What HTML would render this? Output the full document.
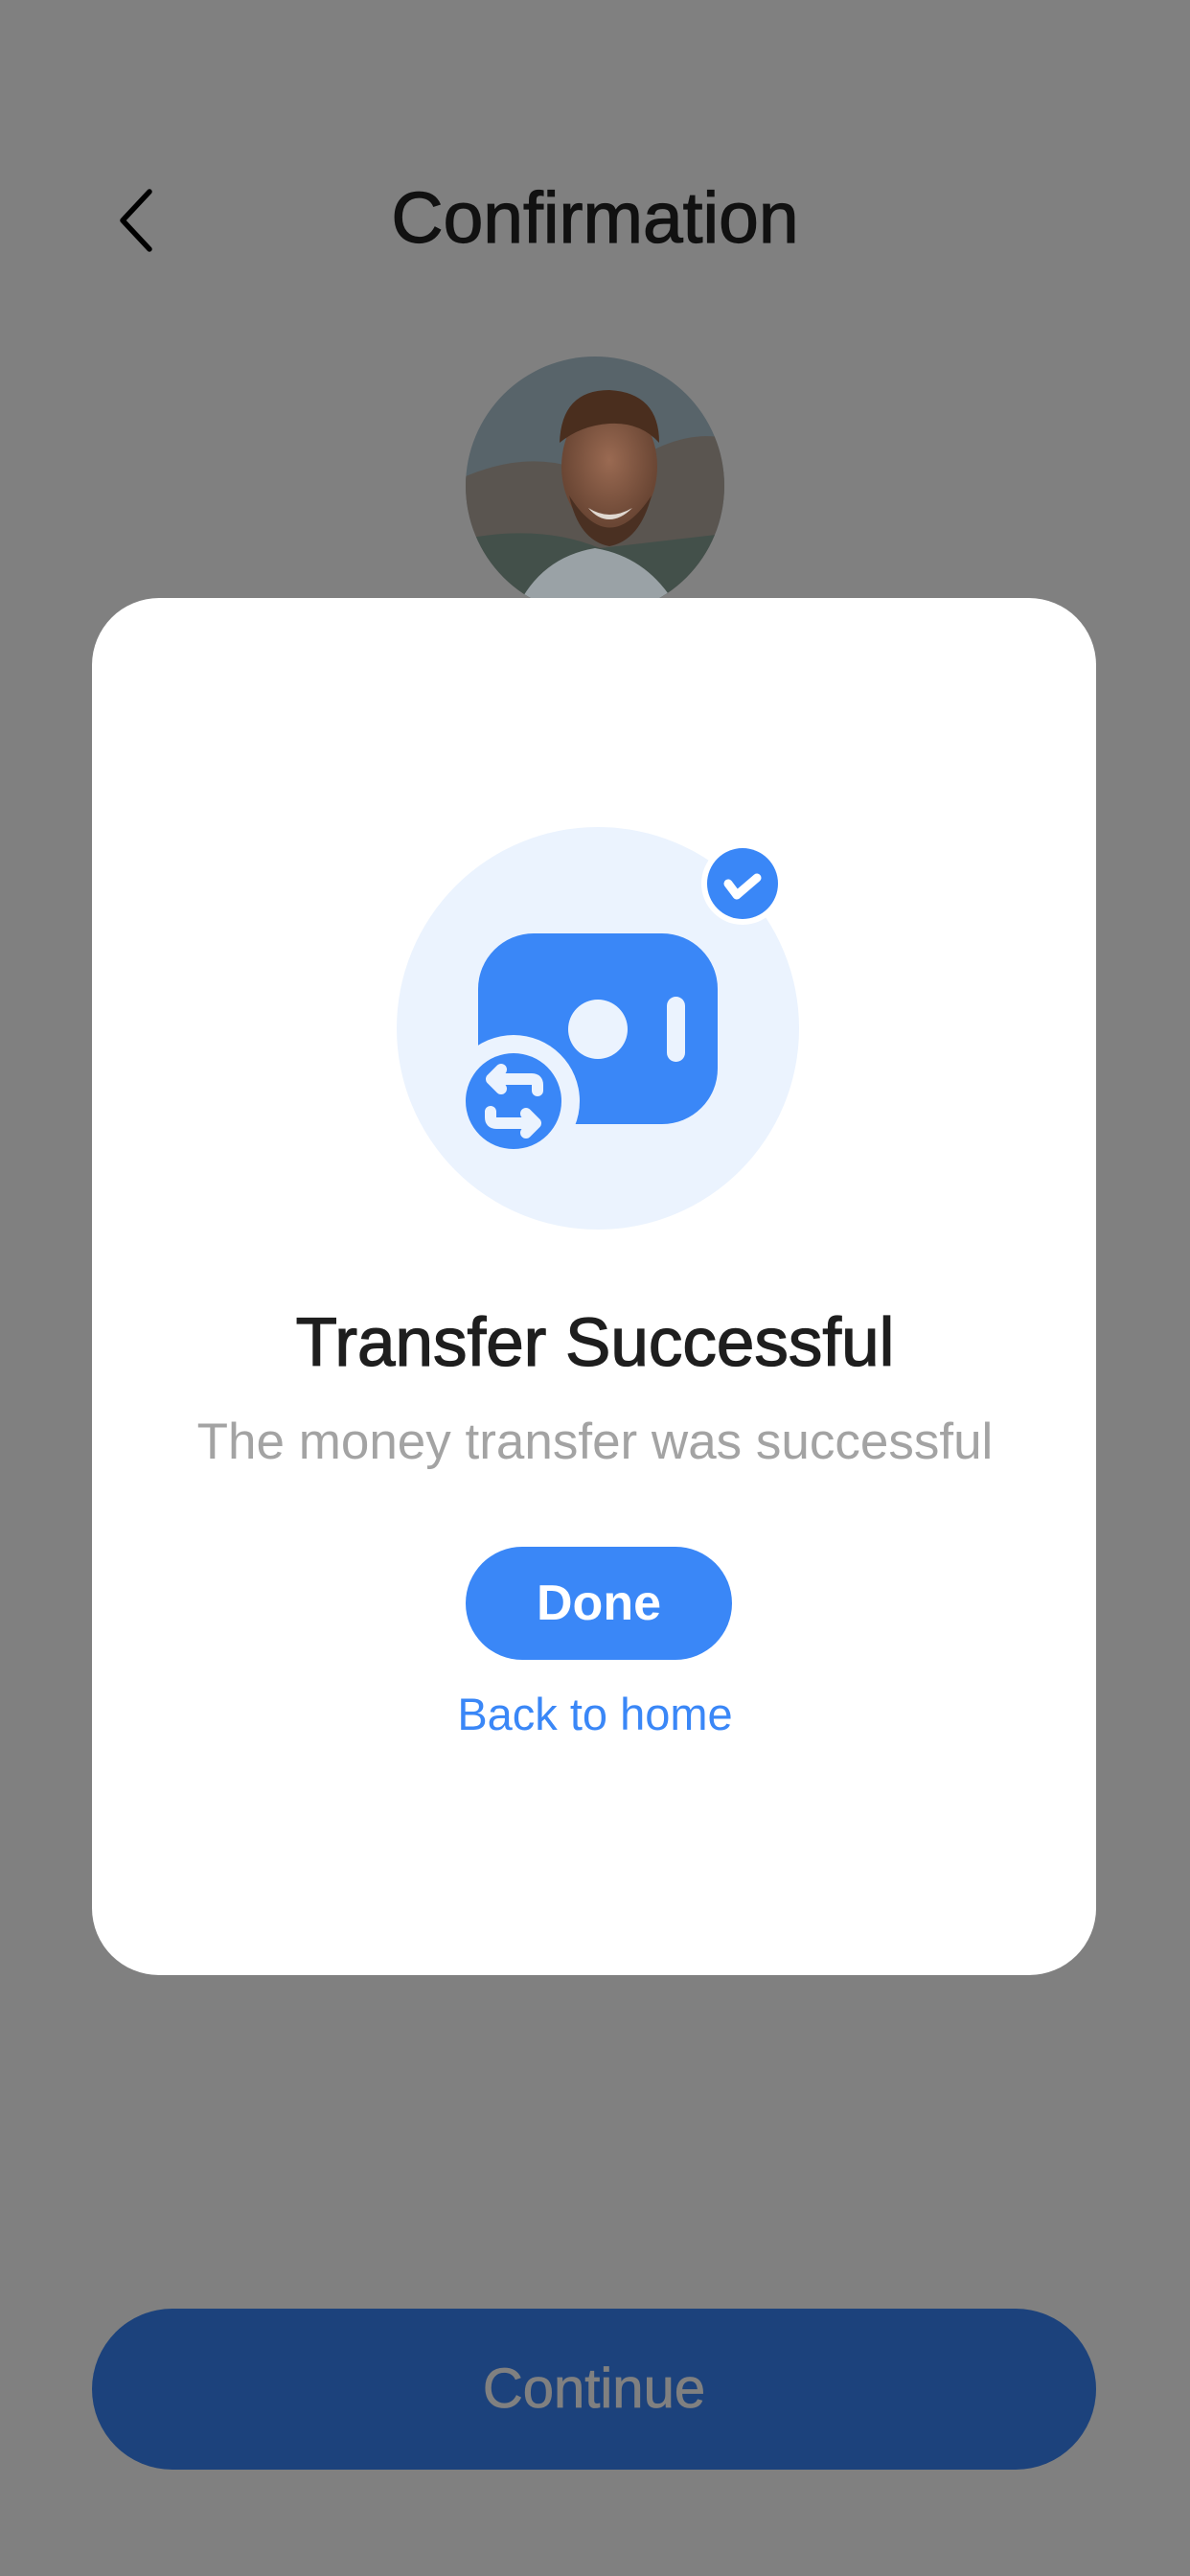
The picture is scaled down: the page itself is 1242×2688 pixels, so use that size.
<!DOCTYPE html>
<html><head><meta charset="utf-8"><style>
html,body{margin:0;padding:0}
body{width:1242px;height:2688px;background:#808080;position:relative;overflow:hidden;font-family:"Liberation Sans",sans-serif}
.abs{position:absolute}
.title{left:0;width:1242px;top:182px;text-align:center;font-size:75px;color:#111;-webkit-text-stroke:1.2px #111;line-height:90px}
.modal{left:96px;top:624px;width:1048px;height:1437px;background:#fff;border-radius:70px}
.h{left:0;width:1242px;top:1357px;text-align:center;font-size:71px;color:#1e1e1e;-webkit-text-stroke:1.3px #1e1e1e;line-height:90px}
.sub{left:0;width:1242px;top:1473px;text-align:center;font-size:53px;color:#a3a3a3;line-height:64px}
.done{left:486px;top:1614px;width:278px;height:118px;border-radius:59px;background:#3a87f7;color:#fff;font-size:52px;font-weight:bold;text-align:center;line-height:118px}
.back{left:0;width:1242px;top:1760px;text-align:center;font-size:47px;color:#3a87f7;line-height:58px}
.cont{left:96px;top:2409px;width:1048px;height:168px;border-radius:84px;background:#1c427c;color:#808080;font-size:58px;text-align:center;line-height:168px;-webkit-text-stroke:0.8px #808080}
</style></head><body>
<svg class="abs" style="left:110px;top:190px" width="60" height="80" viewBox="0 0 60 80"><path d="M46 10 L18 40 L46 70" fill="none" stroke="#000" stroke-width="5.5" stroke-linecap="round" stroke-linejoin="round"/></svg>
<div class="abs title">Confirmation</div>
<svg class="abs" style="left:486px;top:372px" width="270" height="270" viewBox="0 0 270 270">
<defs><clipPath id="c"><circle cx="135" cy="135" r="135"/></clipPath>
<radialGradient id="f" cx="0.5" cy="0.45" r="0.5"><stop offset="0" stop-color="#9a6a52"/><stop offset="1" stop-color="#6a4634"/></radialGradient></defs>
<g clip-path="url(#c)">
<rect width="270" height="270" fill="#58646a"/>
<path d="M0 125 Q60 100 110 115 L160 120 Q220 75 270 85 L270 270 L0 270Z" fill="#5a5550"/>
<path d="M0 190 Q80 175 140 200 L270 185 L270 270 L0 270Z" fill="#43504a"/>
<path d="M50 270 Q75 210 135 200 Q195 210 225 270Z" fill="#9aa2a6"/>
<ellipse cx="150" cy="115" rx="50" ry="68" fill="url(#f)"/>
<path d="M98 90 Q100 35 150 35 Q202 38 202 90 Q182 68 150 70 Q120 72 98 90Z" fill="#4a2e1e"/>
<path d="M108 145 Q150 212 194 145 Q182 192 150 198 Q118 192 108 145Z" fill="#4a3022"/>
<path d="M128 158 Q150 172 174 158 Q162 170 150 170 Q138 170 128 158Z" fill="#e0d8d0"/>
</g></svg>
<div class="abs modal"></div>
<svg class="abs" style="left:0;top:0" width="1242" height="2688" viewBox="0 0 1242 2688">
<circle cx="624" cy="1073" r="210" fill="#ebf3fe"/>
<rect x="499" y="974" width="250" height="199" rx="58" fill="#3a87f7"/>
<circle cx="624" cy="1074" r="31" fill="#ebf3fe"/>
<rect x="696" y="1040" width="19" height="68" rx="9.5" fill="#ebf3fe"/>
<circle cx="536" cy="1149" r="69" fill="#ebf3fe"/>
<circle cx="536" cy="1149" r="50" fill="#3a87f7"/>
<g fill="none" stroke="#ebf3fe" stroke-width="12" stroke-linecap="round" stroke-linejoin="round">
<path d="M561 1138 V1132 Q561 1126 555 1126 H514"/>
<path d="M523 1116 L513 1126 L523 1136"/>
<path d="M512 1160 V1166 Q512 1172 518 1172 H558"/>
<path d="M549 1162 L559 1172 L549 1182"/>
</g>
<circle cx="775" cy="922" r="43" fill="#fff"/>
<circle cx="775" cy="922" r="37" fill="#3a87f7"/>
<path d="M760 922 L769 934 L790 916" fill="none" stroke="#fff" stroke-width="9" stroke-linecap="round" stroke-linejoin="round"/>
</svg>
<div class="abs h">Transfer Successful</div>
<div class="abs sub">The money transfer was successful</div>
<div class="abs done">Done</div>
<div class="abs back">Back to home</div>
<div class="abs cont">Continue</div>
</body></html>
